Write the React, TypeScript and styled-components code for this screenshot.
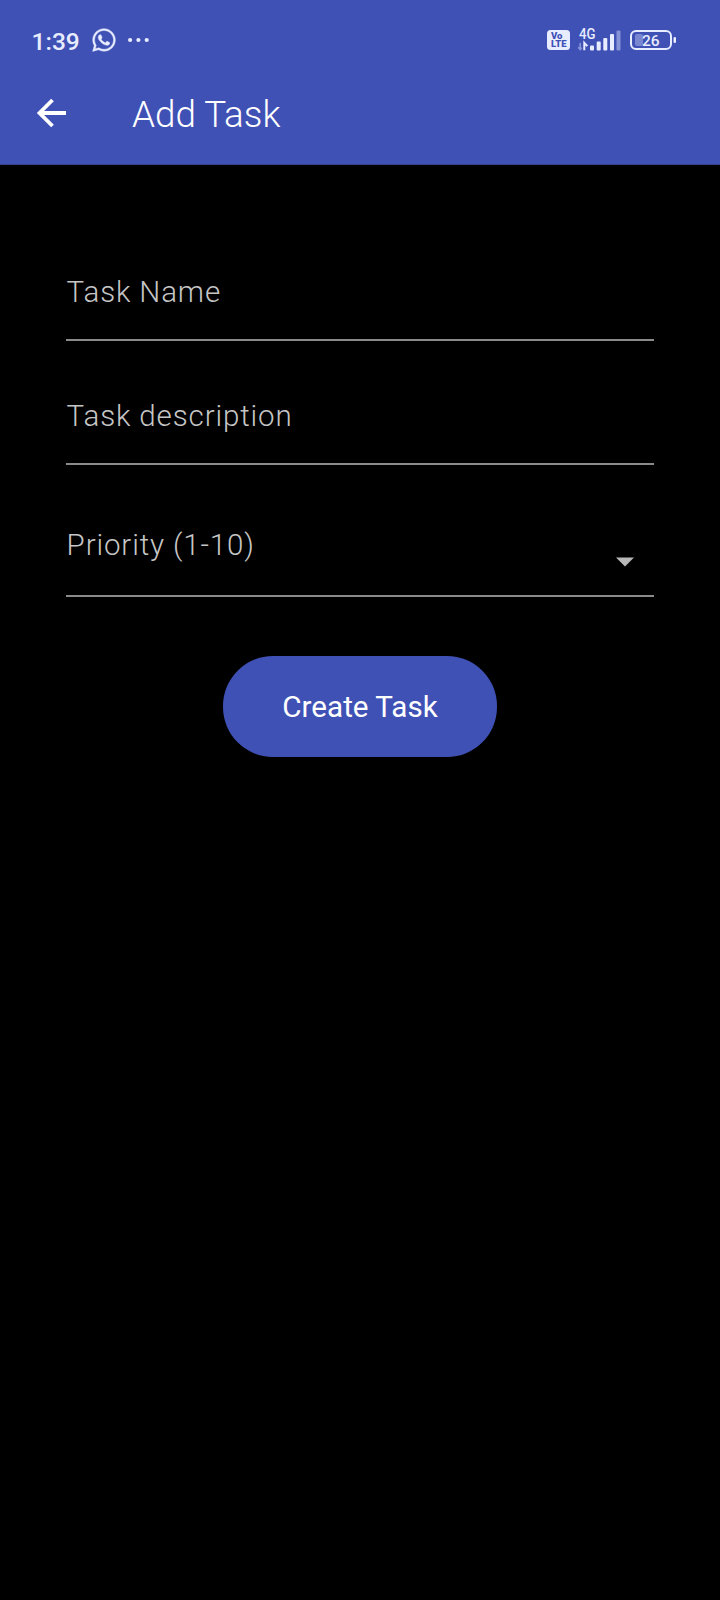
import React from 'react';
import styled, { createGlobalStyle } from 'styled-components';
import { FaWhatsapp } from 'react-icons/fa';

const GlobalStyle = createGlobalStyle`
  * { box-sizing: border-box; }
  body { margin: 0; background: #000; font-family: Roboto, sans-serif; }
`;

const Screen = styled.div`
  width: 720px;
  height: 1600px;
  background: #000;
`;

const Header = styled.header`
  height: 165px;
  background: #3f51b5;
  border-bottom: 1px solid #36428c;
`;

const StatusBar = styled.div`
  height: 80px;
  display: flex;
  align-items: center;
  justify-content: space-between;
  padding: 0 43px 0 31.5px;
  color: #e8ecff;
`;

const StatusGroup = styled.div<{ $gap: number }>`
  display: flex;
  align-items: center;
  gap: ${({ $gap }) => $gap}px;
`;

const Clock = styled.span`
  padding-top: 3px;
  font-size: 24.5px;
  line-height: 30px;
  font-weight: 500;
`;

const WhatsappIcon = styled(FaWhatsapp)`
  width: 26px;
  height: 26px;
  overflow: visible;
  stroke: currentColor;
  stroke-width: 8px;
`;

const AppBar = styled.div`
  height: 68px;
  display: flex;
  align-items: center;
  padding-left: 32px;
  gap: 60px;
`;

const BackButton = styled.button`
  display: flex;
  padding: 0 0 2px;
  border: 0;
  background: none;
`;

const Title = styled.h1`
  margin: 0;
  padding-top: 2px;
  font-size: 36.8px;
  line-height: 44px;
  font-weight: 300;
  color: #fff;
`;

const Form = styled.form`
  display: flex;
  flex-direction: column;
  padding: 84px 66px 0;
`;

const Field = styled.label<{ $height: number; $top: number }>`
  display: flex;
  justify-content: space-between;
  align-items: flex-start;
  height: ${({ $height }) => $height}px;
  padding-top: ${({ $top }) => $top}px;
  border-bottom: 2px solid #8a8a8a;
`;

const FieldLabel = styled.span`
  padding-left: 0.6px;
  font-size: 29.5px;
  line-height: 36px;
  font-weight: 300;
  letter-spacing: 0.87px;
  color: #c6c6c6;
`;

const Caret = styled.svg`
  margin: 29.5px 20px 0 0;
`;

const SubmitButton = styled.button`
  align-self: center;
  width: 274px;
  height: 101px;
  margin-top: 59px;
  padding: 0;
  border: 0;
  border-radius: 50px;
  background: #3f51b5;
  color: #fff;
  font: 400 29.6px/36px Roboto, sans-serif;
`;

const VolteIcon = () => (
  <svg width="23" height="20" viewBox="0 0 23 20">
    <rect width="23" height="20" rx="3.5" fill="#e8ecff" />
    <g fill="#3f51b5" fontFamily="Roboto, sans-serif" fontWeight="900">
      <text x="4" y="9.2" fontSize="8.8" textLength="11.5" lengthAdjust="spacingAndGlyphs">Vo</text>
      <text x="4" y="17.4" fontSize="8.8" textLength="15.5" lengthAdjust="spacingAndGlyphs">LTE</text>
    </g>
  </svg>
);

const SignalIcon = () => (
  <svg width="45" height="32" viewBox="0 -4 45 32">
    <text x="1" y="11" fontSize="14" fontWeight="500" fontFamily="Roboto, sans-serif" fill="#e8ecff" textLength="16.5" lengthAdjust="spacingAndGlyphs">4G</text>
    <path d="M2.2 15v6.5M0 19l2.2 2.5 1.6-1.8" fill="none" stroke="#8794da" strokeWidth="1.6" />
    <path d="M6.3 22.3v-7.5l3 3.4" fill="none" stroke="#e8ecff" strokeWidth="2" />
    <g fill="#e8ecff">
      <rect x="12" y="17.5" width="4" height="5" rx="1" />
      <rect x="18.7" y="13.5" width="4" height="9" rx="1" />
      <rect x="25.3" y="10" width="4" height="12.5" rx="1" />
      <rect x="32" y="6" width="4" height="16.5" rx="1" />
    </g>
    <rect x="38.5" y="2.5" width="4" height="20" rx="1" fill="#8592d6" />
  </svg>
);

const BatteryIcon = () => (
  <svg width="47" height="22" viewBox="0 0 47 22">
    <rect x="1" y="2" width="40" height="18" rx="5" fill="none" stroke="#e8ecff" strokeWidth="2" />
    <rect x="5" y="5" width="8" height="12" rx="2" fill="#7987d1" />
    <rect x="43.5" y="8" width="2.5" height="6" rx="1" fill="#e8ecff" />
    <text x="12" y="16.9" fontSize="15.5" fontWeight="500" fontFamily="Roboto, sans-serif" fill="#e8ecff" textLength="17.5">26</text>
  </svg>
);

export default function App() {
  return (
    <Screen>
      <GlobalStyle />
      <Header>
        <StatusBar>
          <StatusGroup $gap={11}>
            <Clock>1:39</Clock>
            <WhatsappIcon />
            <svg width="22" height="6" viewBox="0 0 22 6" fill="currentColor">
              <circle cx="2.1" cy="3" r="2.1" />
              <circle cx="10.4" cy="3" r="2.1" />
              <circle cx="18.7" cy="3" r="2.1" />
            </svg>
          </StatusGroup>
          <StatusGroup $gap={7.5}>
            <VolteIcon />
            <SignalIcon />
            <BatteryIcon />
          </StatusGroup>
        </StatusBar>
        <AppBar>
          <BackButton type="button" aria-label="Back">
            <svg width="40" height="40" viewBox="0 0 40 40" fill="none" stroke="#fff" strokeWidth="3.8">
              <path d="M34 20H7M20.5 7L7.5 20l13 13" />
            </svg>
          </BackButton>
          <Title>Add Task</Title>
        </AppBar>
      </Header>
      <Form>
        <Field $height={92} $top={25}>
          <FieldLabel>Task Name</FieldLabel>
        </Field>
        <Field $height={124} $top={57}>
          <FieldLabel>Task description</FieldLabel>
        </Field>
        <Field $height={132} $top={62}>
          <FieldLabel>Priority (1-10)</FieldLabel>
          <Caret width="18" height="10" viewBox="0 0 18 10">
            <path d="M0 .5h18L9 9.5z" fill="#b8b8b8" />
          </Caret>
        </Field>
        <SubmitButton type="button">Create Task</SubmitButton>
      </Form>
    </Screen>
  );
}
